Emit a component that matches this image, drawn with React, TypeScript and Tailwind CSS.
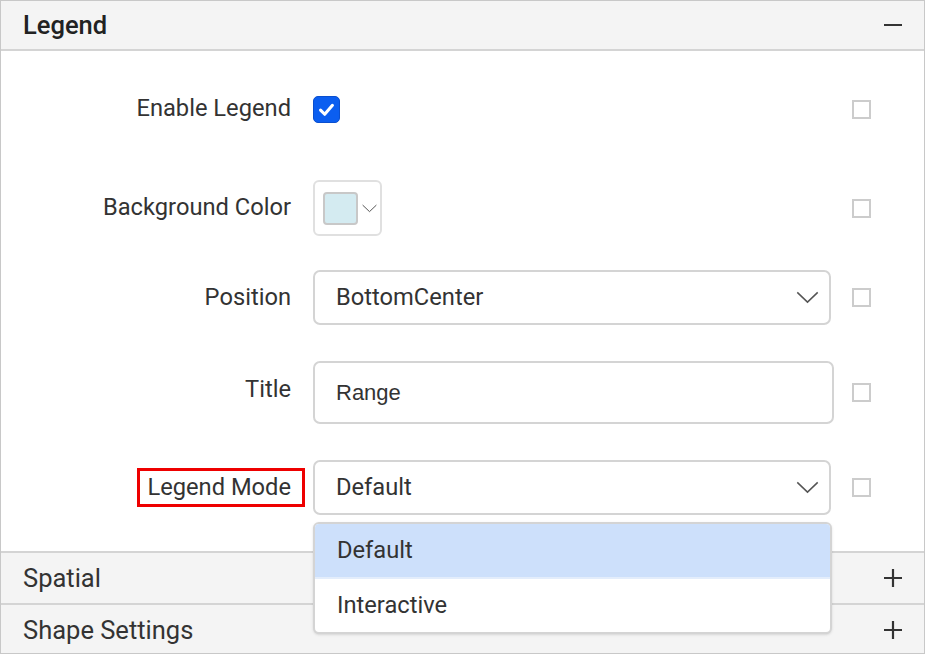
import React from 'react';

const Chevron = ({ className }: { className?: string }) => (
  <svg viewBox="0 0 24 14" className={className} fill="none" stroke="currentColor" strokeWidth="1.6">
    <path d="M1 1.5 L12 12 L23 1.5" />
  </svg>
);

const Plus = () => (
  <svg viewBox="0 0 18 18" className="w-[18px] h-[18px]" fill="none" stroke="#333333" strokeWidth="2.2">
    <path d="M0 9 H18 M9 0 V18" />
  </svg>
);

const SmallBox = () => <div className="w-[19px] h-[19px] border-2 border-[#cccccc] bg-white shrink-0" />;

const Row = ({ label, h, children, boxed }: { label: string; h: string; children: React.ReactNode; boxed?: boolean }) => (
  <div className={`flex items-center ${h}`}>
    <div className="w-[312px] flex justify-end pr-[22px] shrink-0">
      {boxed ? (
        <span className="h-[39px] flex items-center border-[3px] border-[#ee0000] pl-[7px] pr-[11px] -mr-[14px]">{label}</span>
      ) : (
        <span>{label}</span>
      )}
    </div>
    <div className="w-[539px] shrink-0 flex items-center">{children}</div>
    <SmallBox />
  </div>
);

export default function App() {
  return (
    <div className="w-[925px] h-[654px] bg-white border border-[#c8c8c8] overflow-hidden text-[#333333] text-[23.7px] font-['Roboto',sans-serif] relative">
      <div className="h-[50px] bg-[#f4f4f4] border-b-2 border-[#d4d4d4] flex items-center justify-between pl-[22px] pr-[22px]">
        <span className="text-[25.5px] font-medium text-[#222222]">Legend</span>
        <span className="w-[18px] h-[2px] bg-[#333333]" />
      </div>

      <div className="h-[500px] pt-[31px]">
        <Row label="Enable Legend" h="h-[54px]">
          <div className="w-[27px] h-[27px] rounded-[5px] bg-[#0b5ef0] border border-[#0a4fcf] flex items-center justify-center">
            <svg viewBox="0 0 16 16" className="w-[19px] h-[19px]" fill="none" stroke="white" strokeWidth="2.6" strokeLinecap="round" strokeLinejoin="round">
              <path d="M3 8.5 L6.5 12 L13 4.5" />
            </svg>
          </div>
        </Row>
        <div className="h-[44px]" />
        <Row label="Background Color" h="h-[56px]">
          <div className="w-[69px] h-[56px] border-2 border-[#e0e0e0] rounded-[6px] flex items-center pl-[8px] gap-[4px]">
            <div className="w-[35px] h-[33px] rounded-[4px] bg-[#d4ebf1] border-2 border-[#c8c8c8]" />
            <Chevron className="w-[15px] h-[9px] text-[#555555]" />
          </div>
        </Row>
        <div className="h-[34px]" />
        <Row label="Position" h="h-[55px]">
          <div className="w-[518px] h-[55px] border-2 border-[#d4d4d4] rounded-[7px] flex items-center justify-between pl-[21px] pr-[10px]">
            <span>BottomCenter</span>
            <Chevron className="w-[23px] h-[13px] text-[#555555]" />
          </div>
        </Row>
        <div className="h-[36px]" />
        <div className="flex items-center h-[63px]">
          <div className="w-[312px] flex justify-end pr-[22px] shrink-0 self-start pt-[11px]">
            <span>Title</span>
          </div>
          <div className="w-[539px] shrink-0 flex items-center">
            <div className="w-[521px] h-[63px] border-2 border-[#d4d4d4] rounded-[7px] flex items-center pl-[21px] text-[22px] font-['Liberation_Sans',sans-serif]">
              Range
            </div>
          </div>
          <SmallBox />
        </div>
        <div className="h-[36px]" />
        <Row label="Legend Mode" h="h-[55px]" boxed>
          <div className="w-[518px] h-[55px] border-2 border-[#d4d4d4] rounded-[7px] flex items-center justify-between pl-[21px] pr-[10px]">
            <span>Default</span>
            <Chevron className="w-[23px] h-[13px] text-[#555555]" />
          </div>
        </Row>
      </div>

      <div className="h-[52px] bg-[#f4f4f4] border-t-2 border-[#d4d4d4] flex items-center justify-between pl-[22px] pr-[22px]">
        <span className="text-[25.5px]">Spatial</span>
        <Plus />
      </div>
      <div className="h-[52px] bg-[#f4f4f4] border-t-2 border-[#d4d4d4] flex items-center justify-between pl-[22px] pr-[22px]">
        <span className="text-[25.5px]">Shape Settings</span>
        <Plus />
      </div>

      <div className="absolute left-[312px] top-[521px] w-[519px] h-[112px] bg-white border-2 border-[#d4d4d4] rounded-[6px] overflow-hidden shadow-sm">
        <div className="h-[55px] bg-[#cde0fb] border-b-2 border-[#e3edfb] flex items-center pl-[22px]">Default</div>
        <div className="h-[53px] flex items-center pl-[22px]">Interactive</div>
      </div>
    </div>
  );
}
